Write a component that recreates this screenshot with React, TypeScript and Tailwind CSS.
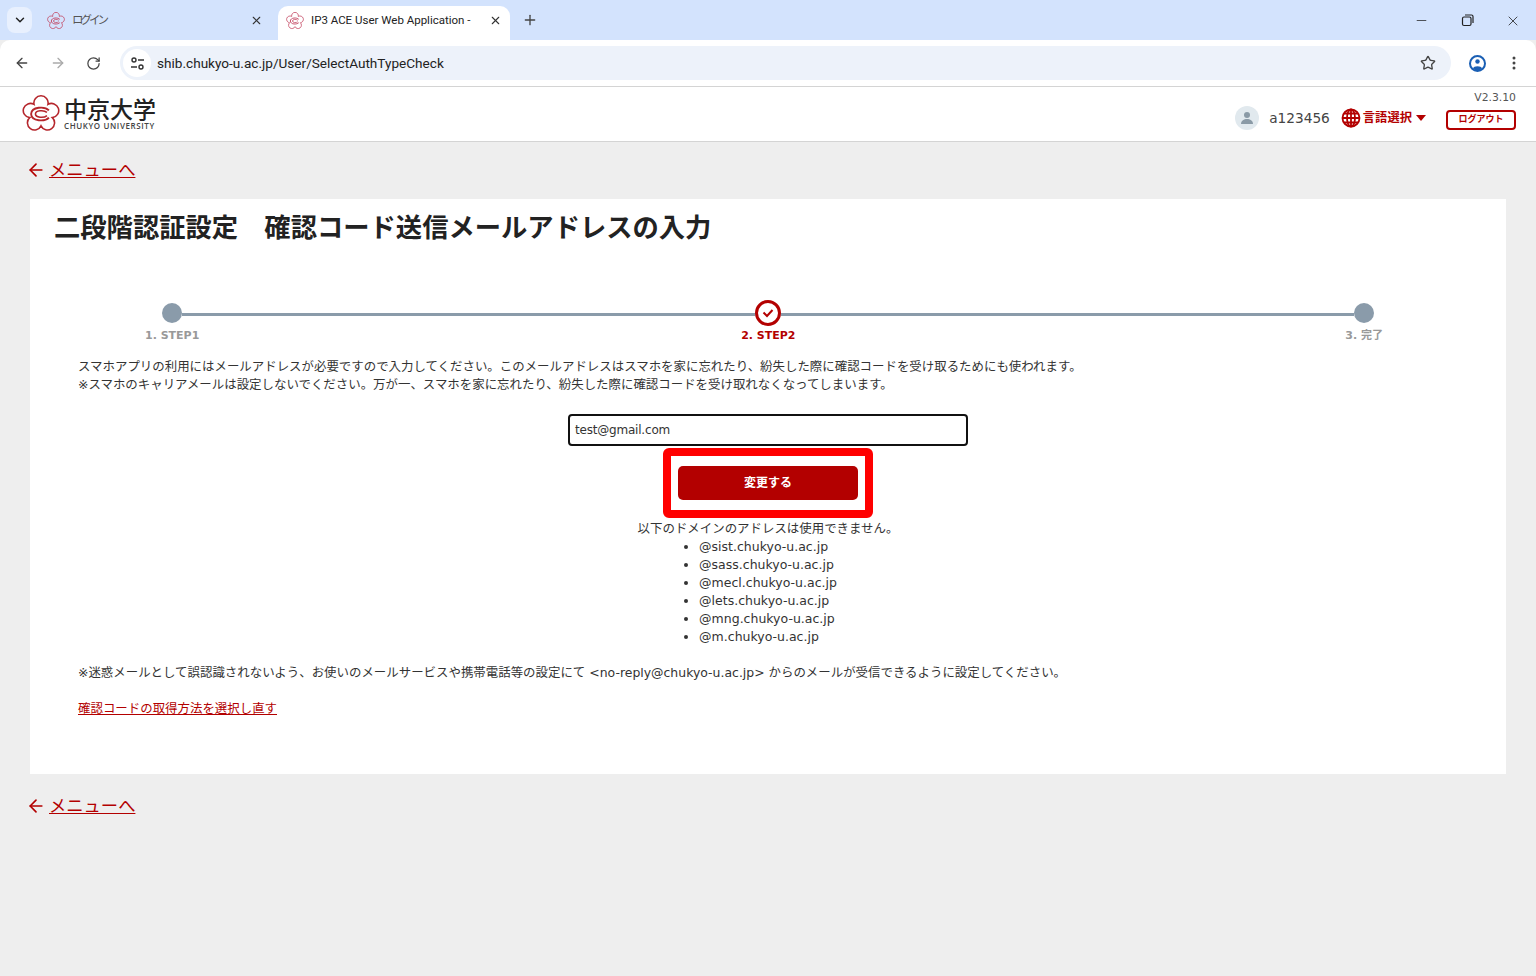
import { ArrowLeft, ArrowRight, ChevronDown, Minus, Plus, RotateCw, Star, X } from "lucide-react";

const jp = "font-['DejaVu_Sans','Noto_Sans_CJK_JP',sans-serif]";
const ui = "font-['Roboto','Noto_Sans_CJK_JP',sans-serif]";

function Flower({ size, stroke = "#b5262c" }: { size: number; stroke?: string }) {
  return (
    <svg width={size} height={size} viewBox="-4 -4 48 48" fill="none" className="shrink-0">
      <path
        d="M11.200 7.900A9 9 0 1 1 28.800 7.900A9 9 0 1 1 34.300 24.600A9 9 0 1 1 20 35A9 9 0 1 1 5.700 24.600A9 9 0 1 1 11.200 7.900Z"
        stroke={stroke}
        strokeWidth="2"
      />
      <path d="M30 15.500C25 10 8 10.500 7.500 20C8 29.500 25 30 30 24.500" stroke={stroke} strokeWidth="2.400" />
      <path d="M27.500 18C23.500 14.500 13 15.500 13 20C13 24.500 23.500 25.500 27.500 22" stroke={stroke} strokeWidth="2" />
    </svg>
  );
}

function BrowserTab({ title, active }: { title: string; active?: boolean }) {
  return (
    <div className={`flex h-[34px] w-[232px] items-center rounded-t-[10px] pb-[5px] pl-[8px] pr-[8px] ${active ? "bg-white" : ""}`}>
      <Flower size={18} stroke="#c2405c" />
      <span className={`ml-[7px] flex-1 overflow-hidden whitespace-nowrap text-[11.500px] ${ui} ${active ? "text-[#222]" : "tracking-[-3px] text-[#555]"}`}>{title}</span>
      <X size={13} strokeWidth={2} className="mb-[1px] text-[#333]" />
    </div>
  );
}

function ChromeBar() {
  return (
    <>
      <div className="flex h-10 items-end bg-[#d3e3fd]">
        <div className="mb-[7px] ml-[7px] flex h-[26px] w-[25px] items-center justify-center rounded-lg bg-[#e8f0fe]">
          <ChevronDown size={14} strokeWidth={2.5} className="text-[#222]" />
        </div>
        <div className="ml-[7px] flex">
          <BrowserTab title="ログイン" />
          <div className="w-[7px]" />
          <BrowserTab title="IP3 ACE User Web Application -" active />
        </div>
        <div className="mb-[12px] ml-[12px] text-[#444]">
          <Plus size={16} strokeWidth={2} />
        </div>
        <div className="mb-[11px] ml-auto flex text-[#222]">
          <div className="flex w-[46px] justify-center">
            <Minus size={15} strokeWidth={1.2} />
          </div>
          <div className="flex w-[46px] justify-center">
            <svg width="15" height="15" viewBox="0 0 15 15" fill="none" stroke="currentColor" strokeWidth="1.2">
              <rect x="2.500" y="4" width="8.500" height="8.500" rx="1.500" />
              <path d="M5 2h6.500a1.500 1.500 0 0 1 1.500 1.500V10" />
            </svg>
          </div>
          <div className="flex w-[46px] justify-center">
            <X size={16} strokeWidth={1.2} />
          </div>
        </div>
      </div>
      <div className="flex h-[46px] items-center rounded-t-[10px] bg-white">
        <ArrowLeft size={16} strokeWidth={2} className="ml-[14px] text-[#444]" />
        <ArrowRight size={16} strokeWidth={2} className="ml-5 text-[#aaa]" />
        <RotateCw size={15} strokeWidth={2} className="ml-[20px] text-[#444]" />
        <div className="ml-[19px] flex h-[34px] flex-1 items-center rounded-full bg-[#edf2fa] pl-[3px] pr-[15px]">
          <div className="flex h-7 w-7 items-center justify-center rounded-full bg-white">
            <svg width="15" height="15" viewBox="0 0 15 15" fill="none" stroke="#333" strokeWidth="1.400">
              <circle cx="4" cy="4" r="2" />
              <path d="M8 4h6M1 11h6" />
              <circle cx="11" cy="11" r="2" />
            </svg>
          </div>
          <span className={`ml-[6px] text-[13.600px] text-[#222] ${ui}`}>shib.chukyo-u.ac.jp/User/SelectAuthTypeCheck</span>
          <Star size={16} strokeWidth={2} className="ml-auto text-[#444]" />
        </div>
        <div className="ml-[18px] flex h-[17px] w-[17px] shrink-0 items-center justify-center rounded-full border-2 border-[#1a5fb4]">
          <svg width="13" height="13" viewBox="0 0 13 13" fill="#1a5fb4">
            <circle cx="6.500" cy="4.500" r="2.200" />
            <path d="M2 11.500c.5-3 8.500-3 9 0l-2 1.500h-5z" />
          </svg>
        </div>
        <svg width="4" height="14" viewBox="0 0 4 14" fill="#444" className="ml-[26px] mr-[20px] shrink-0">
          <circle cx="2" cy="2" r="1.500" />
          <circle cx="2" cy="7" r="1.500" />
          <circle cx="2" cy="12" r="1.500" />
        </svg>
      </div>
    </>
  );
}

function SiteHeader() {
  return (
    <div className="flex h-[56px] items-center border-y border-[#d4d4d4] bg-white pl-[22px] pr-[20px]">
      <Flower size={38} />
      <div className="ml-[4px] mt-[-3px]">
        <div className="font-['Noto_Sans_CJK_JP',sans-serif] text-[23px] font-medium leading-[26px] text-[#222]">中京大学</div>
        <div className="font-['Open_Sans',sans-serif] text-[8px] font-semibold leading-[10px] tracking-[0.6px] text-[#444]">CHUKYO UNIVERSITY</div>
      </div>
      <div className="ml-auto flex items-end self-end pb-[11px]">
        <div className="mb-[2px] flex h-5 items-center">
          <div className="flex h-6 w-6 items-center justify-center rounded-full bg-[#e1e9ee]">
            <svg width="14" height="14" viewBox="0 0 14 14" fill="#8a9aa6">
              <circle cx="7" cy="4" r="3" />
              <path d="M1 13c0-3.500 3-5 6-5s6 1.500 6 5z" />
            </svg>
          </div>
          <span className={`ml-[10px] text-[13.700px] text-[#444] ${jp}`}>a123456</span>
          <svg width="20" height="20" viewBox="0 0 20 20" fill="none" stroke="#b30000" strokeWidth="1.800" className="ml-[11px]">
            <circle cx="10" cy="10" r="8.500" />
            <ellipse cx="10" cy="10" rx="4" ry="8.500" />
            <path d="M10 1.500v17M1.500 10h17M3 5.500h14M3 14.500h14" />
          </svg>
          <span className={`ml-[2px] text-[12.300px] font-bold text-[#b30000] ${jp}`}>言語選択</span>
          <div className="ml-1 h-0 w-0 border-x-[5px] border-t-[6px] border-x-transparent border-t-[#b30000]" />
        </div>
        <div className="ml-5 flex flex-col items-end">
          <span className={`mb-[6px] text-[10.800px] leading-[12px] text-[#555] ${jp}`}>V2.3.10</span>
          <div className={`flex h-5 w-[70px] items-center justify-center rounded-[4px] border-2 border-[#b30000] text-[9px] font-bold text-[#b30000] ${jp}`}>
            ログアウト
          </div>
        </div>
      </div>
    </div>
  );
}

function MenuLink() {
  return (
    <a className={`flex items-center text-[#b30000] ${jp}`}>
      <ArrowLeft size={20} strokeWidth={2} className="ml-[-4px]" />
      <span className="ml-[3px] text-[17.300px] leading-[26px] underline">メニューへ</span>
    </a>
  );
}

function Stepper() {
  return (
    <div className={`pl-[67px] pr-[75px] ${jp}`}>
      <div className="flex h-[26px] items-center pl-[17px] pr-[9px]">
        <div className="h-5 w-5 rounded-full bg-[#8a9baa]" />
        <div className="mt-[2px] h-[3px] flex-1 bg-[#8a9baa]" />
        <div className="flex h-[26px] w-[26px] items-center justify-center rounded-full border-[3px] border-[#b30000] bg-white">
          <svg width="12" height="10" viewBox="0 0 12 10" fill="none" stroke="#b30000" strokeWidth="2">
            <path d="M1.500 4.500 5 8l5.500-6" />
          </svg>
        </div>
        <div className="mt-[2px] h-[3px] flex-1 bg-[#8a9baa]" />
        <div className="h-5 w-5 rounded-full bg-[#8a9baa]" />
      </div>
      <div className="mt-[3px] flex justify-between text-[11px] font-bold leading-[14px] text-[#999]">
        <span>1. STEP1</span>
        <span className="mr-2 text-[#b30000]">2. STEP2</span>
        <span>3. 完了</span>
      </div>
    </div>
  );
}

export default function App() {
  const domains = ["sist", "sass", "mecl", "lets", "mng", "m"];
  return (
    <div className="min-h-[976px] bg-[#eeeeee]">
      <ChromeBar />
      <SiteHeader />
      <div className="px-[30px] pt-[15px]">
        <MenuLink />
        <div className="mt-4 h-[575px] bg-white pl-[24px] pr-[48px] pt-[12px]">
          <h1 className={`text-[26.300px] font-bold leading-[34px] text-[#222] ${jp}`}>二段階認証設定　確認コード送信メールアドレスの入力</h1>
          <div className={`pl-[24px] text-[12.450px] leading-[18px] text-[#333] ${jp}`}>
            <div className="mt-[55px]">
              <Stepper />
            </div>
            <p className="mt-[15px]">スマホアプリの利用にはメールアドレスが必要ですので入力してください。このメールアドレスはスマホを家に忘れたり、紛失した際に確認コードを受け取るためにも使われます。</p>
            <p>※スマホのキャリアメールは設定しないでください。万が一、スマホを家に忘れたり、紛失した際に確認コードを受け取れなくなってしまいます。</p>
            <div className="mt-[20px] flex flex-col items-center">
              <div className="flex h-8 w-[400px] items-center rounded-[4px] border-2 border-[#111] px-[5px] text-[12px] tracking-[-0.2px]">test@gmail.com</div>
              <div className="mt-[2px] rounded-[6px] border-[8px] border-[#ff0000] px-[7px] py-[10px]">
                <div className="flex h-[34px] w-[180px] items-center justify-center rounded-[5px] bg-[#b30000] text-[12px] font-bold text-white">変更する</div>
              </div>
              <p className="mt-[2px]">以下のドメインのアドレスは使用できません。</p>
              <ul className="list-disc text-[12.500px]">
                {domains.map((d) => (
                  <li key={d}>@{d}.chukyo-u.ac.jp</li>
                ))}
              </ul>
            </div>
            <p className="mt-[18px]">※迷惑メールとして誤認識されないよう、お使いのメールサービスや携帯電話等の設定にて &lt;no-reply@chukyo-u.ac.jp&gt; からのメールが受信できるように設定してください。</p>
            <p className="mt-[18px]">
              <a className="text-[#b30000] underline">確認コードの取得方法を選択し直す</a>
            </p>
          </div>
        </div>
        <div className="mt-[19px]">
          <MenuLink />
        </div>
      </div>
    </div>
  );
}
